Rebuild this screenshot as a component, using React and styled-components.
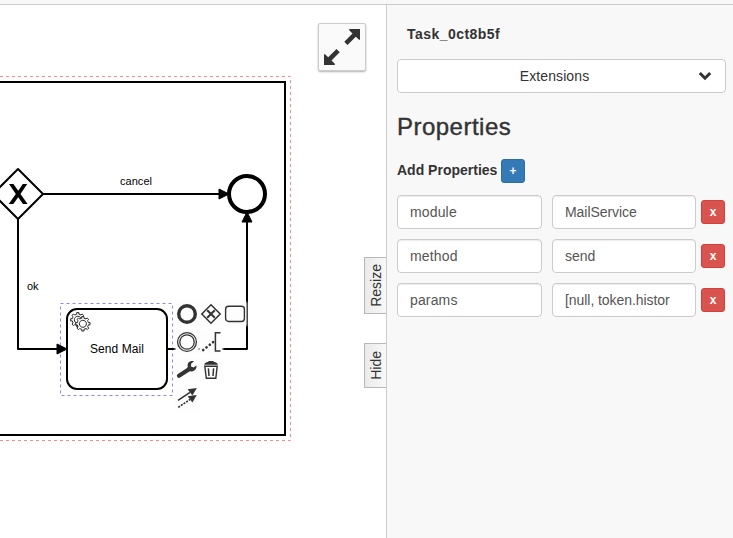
import React from "react";
import styled, { createGlobalStyle } from "styled-components";

const GlobalStyle = createGlobalStyle`
  *, *::before, *::after { box-sizing: border-box; }
  body {
    margin: 0;
    background: #fff;
    color: #333;
    font-family: "Liberation Sans", Arial, sans-serif;
    font-size: 14px;
    line-height: 20px;
  }
`;

const Page = styled.div`
  display: flex;
  flex-direction: column;
  width: 733px;
  height: 538px;
  overflow: hidden;
`;

const TopBar = styled.header`
  flex: none;
  height: 5px;
  background: #f8f8f8;
  border-bottom: 1px solid #ccc;
`;

const Workspace = styled.main`
  flex: 1;
  display: flex;
  min-height: 0;
`;

const Canvas = styled.section`
  position: relative;
  flex: 1;
  min-width: 0;
  background: #fff;
`;

const Diagram = styled.svg`
  display: block;
  width: 386px;
  height: 533px;
  font-family: "Liberation Sans", Arial, sans-serif;
`;

const ExpandButton = styled.button`
  position: absolute;
  top: 18px;
  right: 20px;
  width: 48px;
  height: 48px;
  padding: 0;
  background: #fafafa;
  border: 1px solid #ccc;
  border-radius: 2px;
  box-shadow: 0 1px 2px rgba(0, 0, 0, 0.3);

  svg { display: block; }
`;

const ContextPad = styled.div`
  position: absolute;
  left: 176px;
  top: 298px;
  display: grid;
  grid-template-columns: repeat(3, 22px);
  grid-auto-rows: 22px;
  gap: 6px 2px;
`;

const PadEntry = styled.button`
  grid-column: ${(p) => p.$column};
  width: 22px;
  height: 22px;
  padding: 0;
  border: 0;
  background: #fdfdfd;
  box-shadow: 0 0 2px 1px rgba(253, 253, 253, 0.9);

  svg { display: block; overflow: visible; }
`;

const Tabs = styled.div`
  position: absolute;
  top: 252px;
  right: 0;
  display: flex;
  flex-direction: column;
  gap: 29px;
`;

const Tab = styled.button`
  display: flex;
  align-items: center;
  justify-content: center;
  width: 22px;
  height: ${(p) => p.$height}px;
  padding: 0 0 0 1px;
  border: 1px solid #b8b8b8;
  border-right: 0;
  background: linear-gradient(to right, #eaeaea, #f8f8f8);
  color: #333;
  font: 14px/18px "Liberation Sans", Arial, sans-serif;
`;

const TabText = styled.span`
  writing-mode: vertical-rl;
  transform: rotate(180deg);
`;

const Panel = styled.aside`
  flex: none;
  width: 347px;
  padding: 19px 7px 0 10px;
  background: #f8f8f8;
  border-left: 1px solid #ccc;
`;

const ElementName = styled.div`
  padding-left: 10px;
  font-weight: bold;
  letter-spacing: 0.45px;
`;

const GroupSelect = styled.div`
  display: flex;
  align-items: center;
  height: 34px;
  margin-top: 15px;
  padding: 0 13px 0 12px;
  background: #fff;
  border: 1px solid #ccc;
  border-radius: 4px;

  svg { flex: none; }
`;

const GroupLabel = styled.span`
  flex: 1;
  padding-left: 1px;
  text-align: center;
  letter-spacing: 0.1px;
`;

const Heading = styled.h3`
  margin: 21px 0 0;
  font-size: 24px;
  line-height: 26px;
  font-weight: 500;
  letter-spacing: 0.48px;
  -webkit-text-stroke: 0.4px #333;
`;

const AddRow = styled.div`
  display: flex;
  align-items: center;
  gap: 4px;
  margin-top: 19px;
`;

const AddLabel = styled.span`
  width: 100px;
  padding-bottom: 2px;
  white-space: nowrap;
  font-weight: bold;
`;

const SmallButton = styled.button`
  flex: none;
  width: 24px;
  height: 24px;
  padding: 0;
  border: 1px solid ${(p) => (p.$danger ? "#d43f3a" : "#2e6da4")};
  border-radius: 3px;
  background: ${(p) => (p.$danger ? "#d9534f" : "#337ab7")};
  color: #fff;
  font: bold 12px/20px "Liberation Sans", Arial, sans-serif;
`;

const Rows = styled.div`
  display: grid;
  gap: 10px;
  margin-top: 12px;
`;

const PropertyRow = styled.div`
  display: grid;
  grid-template-columns: 145px 144px 24px;
  column-gap: 10px;
  align-items: center;

  ${SmallButton} { margin-left: -5px; }
`;

const Field = styled.input`
  width: 100%;
  min-width: 0;
  height: 34px;
  padding: 0 25px 0 12px;
  border: 1px solid #ccc;
  border-radius: 4px;
  background: #fff;
  box-shadow: inset 0 1px 1px rgba(0, 0, 0, 0.075);
  color: #555;
  font: 14px/20px "Liberation Sans", Arial, sans-serif;
  letter-spacing: ${(p) => p.$spacing}px;
`;

const GEAR =
  "v -1.71335 c 0.352326,-0.0705 0.703932,-0.17838 1.047628,-0.32133 0.344416,-0.14465 0.665822,-0.32133 0.966377,-0.52145 l 1.19431,1.18005 1.567487,-1.57688 -1.195028,-1.18014 c 0.403376,-0.61394 0.683079,-1.29908 0.825447,-2.01824 l 1.622133,-0.01 v -2.2196 l -1.636514,0.01 c -0.07333,-0.35153 -0.178319,-0.70024 -0.323564,-1.04372 -0.145244,-0.34406 -0.321407,-0.6644 -0.522735,-0.96217 l 1.131035,-1.13631 -1.583305,-1.56293 -1.129598,1.13589 c -0.614052,-0.40108 -1.302883,-0.68093 -2.022633,-0.82247 l 0.0093,-1.61852 h -2.241173 l 0.0042,1.63124 c -0.353763,0.0736 -0.705369,0.17977 -1.049785,0.32371 -0.344415,0.14437 -0.665102,0.32092 -0.9635006,0.52006 l -1.1698628,-1.15823 -1.5667691,1.5792 1.1684265,1.15669 c -0.4026573,0.61283 -0.68308,1.29797 -0.8247287,2.01713 l -1.6588041,0.003 v 2.22174 l 1.6724648,-0.006 c 0.073327,0.35077 0.1797598,0.70243 0.3242851,1.04472 0.1452428,0.34448 0.3214064,0.6644 0.5227339,0.96066 l -1.1993431,1.19723 1.5840256,1.56011 1.1964668,-1.19348 c 0.6140517,0.40346 1.3028827,0.68232 2.0233517,0.82331 l 7.19e-4,1.69892 h 2.226848 z m 0.221462,-3.9957 c -1.788948,0.7502 -3.8576,-0.0928 -4.6097055,-1.87438 -0.7521065,-1.78321 0.090598,-3.84627 1.8802645,-4.59604 1.78823,-0.74936 3.856881,0.0929 4.608987,1.87437 0.752106,1.78165 -0.0906,3.84612 -1.879546,4.59605 z";

const ProcessDiagram = () => (
  <Diagram viewBox="0 5 386 533">
    <g fill="none">
      <path d="M0 76.5H290.5V440.5H0" stroke="#f88" strokeDasharray="3 3" />
      <path d="M0 82H285V435H0" stroke="#000" strokeWidth="2" />
      <rect x="60.5" y="303.5" width="112" height="92" stroke="#88f" strokeDasharray="3 3" />
      <g stroke="#000" strokeWidth="2" strokeLinejoin="round">
        <path d="M43 194H222M18 219V349H60M167 349H247V220" />
        <path d="M18 169L43 194L18 219L-7 194Z" fill="#fff" />
        <rect x="67" y="309" width="100" height="80" rx="10" fill="#fff" />
      </g>
      <circle cx="247" cy="194" r="18" stroke="#000" strokeWidth="4" fill="#fff" />
    </g>
    <g fill="#000" stroke="#000">
      <path d="M219 189L229 194L219 199Z" />
      <path d="M57 344L67 349L57 354Z" />
      <path d="M242 222L247 212L252 222Z" />
    </g>
    <path d="M9 184H13.5L18.2 190.8L22.8 184H27.2L20.5 194L27.6 204H23L18.2 197.2L13.3 204H8.7L15.8 194Z" />
    <g fill="#fff" stroke="#222" strokeWidth="1">
      <path d={`m79,327 ${GEAR}`} />
      <circle cx="83" cy="324" r="4.5" stroke="none" />
      <path d={`m84,331 ${GEAR}`} />
    </g>
    <g fill="#000">
      <text x="120" y="185" fontSize="11" textLength="32">cancel</text>
      <text x="27" y="290" fontSize="11">ok</text>
      <text x="90" y="353" fontSize="12" textLength="54">Send Mail</text>
    </g>
  </Diagram>
);

const PadIcon = ({ children }) => (
  <svg width="22" height="22" viewBox="0 0 22 22" fill="none" stroke="#333">
    {children}
  </svg>
);

const PAD_ENTRIES = [
  { name: "end event", column: 1, icon: <circle cx="11" cy="11" r="8.3" strokeWidth="3.4" /> },
  {
    name: "gateway",
    column: 2,
    icon: (
      <g strokeWidth="1.5">
        <path d="M11 1.8L20.2 11L11 20.2L1.8 11Z" />
        <path d="M7.2 7.2L14.8 14.8M14.8 7.2L7.2 14.8" strokeWidth="2" />
      </g>
    ),
  },
  { name: "task", column: 3, icon: <rect x="1.6" y="3.3" width="18.8" height="15.2" rx="3" strokeWidth="1.4" /> },
  {
    name: "intermediate event",
    column: 1,
    icon: (
      <g strokeWidth="1.3">
        <circle cx="11" cy="11" r="9.4" />
        <circle cx="11" cy="11" r="7.2" />
      </g>
    ),
  },
  {
    name: "annotation",
    column: 2,
    icon: (
      <g>
        <path d="M20.5 1.7H15.4V19.9H20.5" strokeWidth="1.5" />
        <path d="M3.2 19L14 10.4" strokeWidth="2.6" strokeLinecap="round" strokeDasharray="0.1 4.1" />
      </g>
    ),
  },
  {
    name: "change type",
    column: 1,
    icon: (
      <g>
        <path d="M3 16.8L13 10.2" strokeWidth="4.2" strokeLinecap="round" />
        <path
          d="M18 2.4C14.2 1.2 10.8 3.8 11.8 7.5L11.3 9L13.6 12.3C17.6 12.9 20.8 10.6 20.6 6.4L17.4 8.6L15 7.5L15.2 4.6Z"
          fill="#333"
          stroke="none"
        />
      </g>
    ),
  },
  {
    name: "remove",
    column: 2,
    icon: (
      <g>
        <path d="M4.1 5.8C4.7 3.4 7.4 3.1 8.5 2.8V2H13.5V2.8C14.8 3.1 17.4 3.4 17.9 5.8Z" fill="#333" stroke="none" />
        <path d="M4.8 7.2H17.2L15.8 19.3H6.3Z" strokeWidth="1.4" />
        <path d="M8.4 9.4L9 17M13.6 9.4L13 17" strokeWidth="1.5" />
      </g>
    ),
  },
  {
    name: "connect",
    column: 1,
    icon: (
      <g strokeWidth="1.6">
        <path d="M2 13.3L14 5.3" />
        <path d="M2.2 20.4L14 12.5" strokeDasharray="2.1 1.1" />
        <path d="M20.8 1L16.4 8.4L11.6 2.2ZM20.8 8.1L16.4 15.5L11.6 9.3Z" fill="#333" stroke="none" />
      </g>
    ),
  },
];

const ExpandIcon = () => (
  <svg width="46" height="46" viewBox="319 24 46 46" fill="#333">
    <path d="M349.2 29H360V39.8H359L355.8 36.8L347.5 45L344.3 41.8L352.5 33.4L349.2 30.2Z" />
    <path d="M334.8 65H324V54.2H325L328.2 57.2L336.5 49L339.7 52.2L331.5 60.6L334.8 63.8Z" />
  </svg>
);

const PROPERTIES = [
  ["module", "MailService"],
  ["method", "send"],
  ["params", "[null, token.history"],
];

export default function App() {
  return (
    <Page>
      <GlobalStyle />
      <TopBar />
      <Workspace>
        <Canvas>
          <ProcessDiagram />
          <ContextPad>
            {PAD_ENTRIES.map(({ name, column, icon }) => (
              <PadEntry key={name} $column={column} aria-label={name}>
                <PadIcon>{icon}</PadIcon>
              </PadEntry>
            ))}
          </ContextPad>
          <ExpandButton aria-label="expand">
            <ExpandIcon />
          </ExpandButton>
          <Tabs>
            <Tab $height={57}><TabText>Resize</TabText></Tab>
            <Tab $height={45}><TabText>Hide</TabText></Tab>
          </Tabs>
        </Canvas>
        <Panel>
          <ElementName>Task_0ct8b5f</ElementName>
          <GroupSelect>
            <GroupLabel>Extensions</GroupLabel>
            <svg width="14" height="10" viewBox="0 0 14 10" fill="none" stroke="#333" strokeWidth="3">
              <path d="M1.8 2L7 7.2L12.2 2" />
            </svg>
          </GroupSelect>
          <Heading>Properties</Heading>
          <AddRow>
            <AddLabel>Add Properties</AddLabel>
            <SmallButton>+</SmallButton>
          </AddRow>
          <Rows>
            {PROPERTIES.map(([name, value]) => (
              <PropertyRow key={name}>
                <Field $spacing={0.15} defaultValue={name} />
                <Field $spacing={-0.06} defaultValue={value} />
                <SmallButton $danger>x</SmallButton>
              </PropertyRow>
            ))}
          </Rows>
        </Panel>
      </Workspace>
    </Page>
  );
}
